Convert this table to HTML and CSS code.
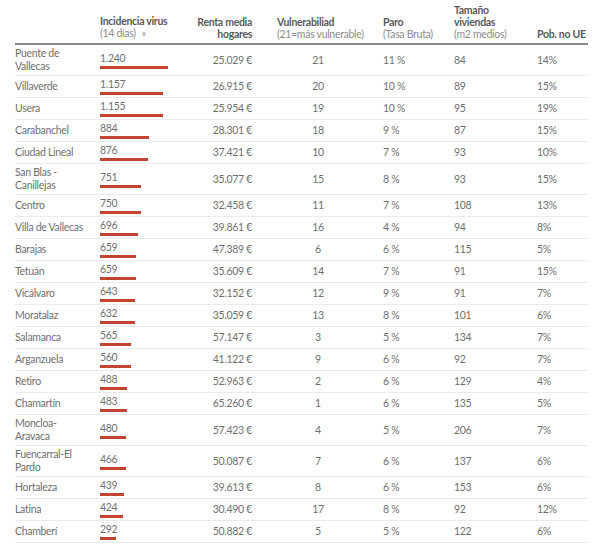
FILE: index.html
```html
<!DOCTYPE html>
<html lang="es">
<head>
    <meta charset="UTF-8">
    <meta name="viewport" content="width=device-width, initial-scale=1.0">
    <title>Incidencia por distrito</title>
    <link rel="stylesheet" href="styles.css">
</head>
<body>
    <div class="container">
        <table class="districts">
            <colgroup>
                <col class="c-name">
                <col class="c-inc">
                <col class="c-rent">
                <col class="c-vuln">
                <col class="c-paro">
                <col class="c-size">
                <col class="c-pob">
            </colgroup>
            <thead>
                <tr>
                    <th></th>
                    <th><b>Incidencia virus</b><br><span class="sub">(14 días)</span> <span class="sort">&#9660;</span></th>
                    <th class="right"><b>Renta media<br>hogares</b></th>
                    <th class="vuln"><b>Vulnerabiliad</b><br><span class="sub">(21=más vulnerable)</span></th>
                    <th><b>Paro</b><br><span class="sub">(Tasa Bruta)</span></th>
                    <th><b>Tamaño<br>viviendas</b><br><span class="sub">(m2 medios)</span></th>
                    <th><b>Pob. no UE</b></th>
                </tr>
            </thead>
            <tbody id="rows">
            </tbody>
        </table>
    </div>

    <script>
    var data = [
        ["Puente de<br>Vallecas", 1240, "25.029", 21, 11, 84, 14],
        ["Villaverde", 1157, "26.915", 20, 10, 89, 15],
        ["Usera", 1155, "25.954", 19, 10, 95, 19],
        ["Carabanchel", 884, "28.301", 18, 9, 87, 15],
        ["Ciudad Lineal", 876, "37.421", 10, 7, 93, 10],
        ["San Blas -<br>Canillejas", 751, "35.077", 15, 8, 93, 15],
        ["Centro", 750, "32.458", 11, 7, 108, 13],
        ["Villa de Vallecas", 696, "39.861", 16, 4, 94, 8],
        ["Barajas", 659, "47.389", 6, 6, 115, 5],
        ["Tetuán", 659, "35.609", 14, 7, 91, 15],
        ["Vicálvaro", 643, "32.152", 12, 9, 91, 7],
        ["Moratalaz", 632, "35.059", 13, 8, 101, 6],
        ["Salamanca", 565, "57.147", 3, 5, 134, 7],
        ["Arganzuela", 560, "41.122", 9, 6, 92, 7],
        ["Retiro", 488, "52.963", 2, 6, 129, 4],
        ["Chamartín", 483, "65.260", 1, 6, 135, 5],
        ["Moncloa-<br>Aravaca", 480, "57.423", 4, 5, 206, 7],
        ["Fuencarral-El<br>Pardo", 466, "50.087", 7, 6, 137, 6],
        ["Hortaleza", 439, "39.613", 8, 6, 153, 6],
        ["Latina", 424, "30.490", 17, 8, 92, 12],
        ["Chamberí", 292, "50.882", 5, 5, 122, 6]
    ];

    function fmt(n) {
        return n >= 1000 ? Math.floor(n / 1000) + "." + String(n % 1000).padStart(3, "0") : String(n);
    }

    var html = "";
    for (var i = 0; i < data.length; i++) {
        var d = data[i];
        var w = (d[1] / 1240 * 68).toFixed(1);
        html += "<tr>";
        html += "<td class='name'>" + d[0] + "</td>";
        html += "<td class='inc'><span class='num'>" + fmt(d[1]) + "</span><div class='bar' style='width:" + w + "px'></div></td>";
        html += "<td class='right'>" + d[2] + " €</td>";
        html += "<td class='vuln'>" + d[3] + "</td>";
        html += "<td>" + d[4] + " %</td>";
        html += "<td>" + d[5] + "</td>";
        html += "<td>" + d[6] + "%</td>";
        html += "</tr>";
    }
    document.getElementById("rows").innerHTML = html;
    </script>
</body>
</html>
```

FILE: styles.css
```css
body {
    margin: 0;
    padding: 0;
    background: #fff;
    font-family: Lato, "Liberation Sans", sans-serif;
    color: #666;
}

.container {
    padding: 4px 12px 0 15px;
}

.districts {
    width: 573px;
    table-layout: fixed;
    border-collapse: collapse;
    font-size: 10.5px;
    letter-spacing: -0.3px;
}

.c-name { width: 85px; }
.c-inc { width: 95px; }
.c-rent { width: 57px; }
.c-vuln { width: 131px; }
.c-paro { width: 71px; }
.c-size { width: 83px; }
.c-pob { width: 51px; }

.districts th {
    text-align: left;
    vertical-align: bottom;
    font-weight: normal;
    line-height: 12px;
    padding: 0 0 3px 0;
    white-space: nowrap;
    border-bottom: 2px solid #8a8a8a;
    color: #555;
}

.districts th b {
    font-weight: 700;
    color: #5a5a5a;
}

.districts th .sub {
    color: #8c8c8c;
}

.districts th .sort {
    color: #bbb;
    font-size: 8px;
    margin-left: 2px;
}

.districts th.vuln {
    padding-left: 25px;
}

.districts td {
    padding: 2px 0;
    height: 17px;
    line-height: 13px;
    color: #707070;
    vertical-align: middle;
    border-bottom: 1px solid #ebebeb;
    white-space: nowrap;
}

.districts td.vuln {
    padding: 2px 24px 2px 25px;
    text-align: center;
}

.districts .right {
    text-align: right;
}

.inc .num {
    display: block;
    line-height: 12px;
}

.bar {
    height: 3px;
    margin-top: 2px;
    background-color: #c4452f;
}
```
